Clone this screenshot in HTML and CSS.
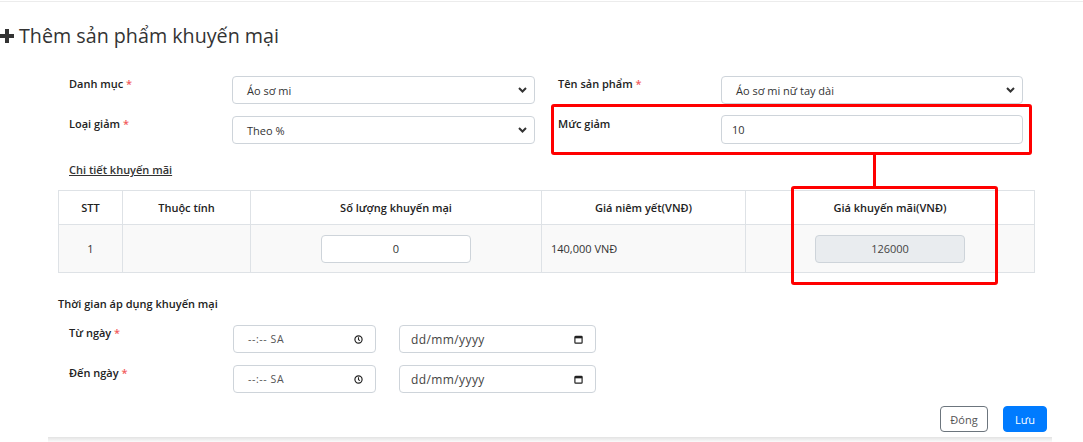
FILE: index.html
```html
<!DOCTYPE html>
<html lang="vi">
<head>
<meta charset="utf-8">
<title>Thêm sản phẩm khuyến mại</title>
<link rel="stylesheet" href="styles.css">
</head>
<body>
<div class="topline"></div>
<h1 class="title">
  <svg class="plus" width="14" height="14" viewBox="0 0 14 14"><path d="M5 0h4v5h5v4H9v5H5V9H0V5h5z" fill="#333"/></svg>
  <span>Thêm sản phẩm khuyến mại</span>
</h1>

<div class="card">
  <div class="form">
    <div class="row">
      <div class="half">
        <label class="lbl">Danh mục <b class="req">*</b></label>
        <div class="select f1"><span>Áo sơ mi</span>
          <svg class="chev" width="9" height="6" viewBox="0 0 9 6"><path d="M1 1l3.5 3.5L8 1" fill="none" stroke="#333" stroke-width="2"/></svg>
        </div>
      </div>
      <div class="half">
        <label class="lbl">Tên sản phẩm <b class="req">*</b></label>
        <div class="select f2"><span>Áo sơ mi nữ tay dài</span>
          <svg class="chev" width="9" height="6" viewBox="0 0 9 6"><path d="M1 1l3.5 3.5L8 1" fill="none" stroke="#333" stroke-width="2"/></svg>
        </div>
      </div>
    </div>
    <div class="row">
      <div class="half">
        <label class="lbl">Loại giảm <b class="req">*</b></label>
        <div class="select f1"><span>Theo %</span>
          <svg class="chev" width="9" height="6" viewBox="0 0 9 6"><path d="M1 1l3.5 3.5L8 1" fill="none" stroke="#333" stroke-width="2"/></svg>
        </div>
      </div>
      <div class="half">
        <label class="lbl">Mức giảm</label>
        <div class="input f2 num">10</div>
      </div>
    </div>
  </div>

  <div class="subhead">Chi tiết khuyến mãi</div>

  <table class="tbl">
    <thead>
      <tr>
        <th class="c1">STT</th>
        <th class="c2">Thuộc tính</th>
        <th class="c3">Số lượng khuyến mại</th>
        <th class="c4">Giá niêm yết(VNĐ)</th>
        <th class="c5">Giá khuyến mãi(VNĐ)</th>
      </tr>
    </thead>
    <tbody>
      <tr>
        <td class="center">1</td>
        <td></td>
        <td class="center"><div class="cellinput">0</div></td>
        <td>140,000 VNĐ</td>
        <td class="center"><div class="cellinput disabled">126000</div></td>
      </tr>
    </tbody>
  </table>

  <div class="timehead">Thời gian áp dụng khuyến mại</div>

  <div class="timerow">
    <label class="lbl tl">Từ ngày <b class="req">*</b></label>
    <div class="input time"><span>--:-- SA</span>
      <svg width="9" height="9" viewBox="0 0 10 10"><circle cx="5" cy="5" r="4" fill="none" stroke="#222" stroke-width="1.3"/><path d="M5 2.6V5.2L6.6 6.3" fill="none" stroke="#222" stroke-width="1.2"/></svg>
    </div>
    <div class="input date"><span>dd/mm/yyyy</span>
      <svg width="9" height="9" viewBox="0 0 10 10"><rect x="1" y="1.5" width="8" height="7.5" rx="0.8" fill="none" stroke="#222" stroke-width="1.3"/><rect x="1" y="1.5" width="8" height="2.2" fill="#222"/></svg>
    </div>
  </div>
  <div class="timerow">
    <label class="lbl tl">Đến ngày <b class="req">*</b></label>
    <div class="input time"><span>--:-- SA</span>
      <svg width="9" height="9" viewBox="0 0 10 10"><circle cx="5" cy="5" r="4" fill="none" stroke="#222" stroke-width="1.3"/><path d="M5 2.6V5.2L6.6 6.3" fill="none" stroke="#222" stroke-width="1.2"/></svg>
    </div>
    <div class="input date"><span>dd/mm/yyyy</span>
      <svg width="9" height="9" viewBox="0 0 10 10"><rect x="1" y="1.5" width="8" height="7.5" rx="0.8" fill="none" stroke="#222" stroke-width="1.3"/><rect x="1" y="1.5" width="8" height="2.2" fill="#222"/></svg>
    </div>
  </div>

  <div class="actions">
    <button class="btn btn-close">Đóng</button>
    <button class="btn btn-save">Lưu</button>
  </div>
</div>

<div class="mark mark1"></div>
<div class="mark-line"></div>
<div class="mark mark2"></div>
</body>
</html>
```

FILE: styles.css
```css
* { box-sizing: border-box; }
html, body { margin: 0; padding: 0; }
body {
  position: relative;
  width: 1083px;
  height: 442px;
  overflow: hidden;
  background: #fff;
  font-family: "Open Sans", "Noto Sans", sans-serif;
  color: #222;
  font-size: 11px;
}
.topline {
  height: 2px;
  border-bottom: 1px solid #ececec;
}
.title {
  margin: 22px 0 0;
  height: 24px;
  line-height: 24px;
  font-size: 19.7px;
  font-weight: 400;
  color: #333;
  display: flex;
  align-items: center;
  gap: 5px;
}
.plus { display: block; }

.card {
  position: relative;
  margin-left: 46px;
  width: 1014px;
  padding: 28px 12px 5px 13px;
  background: #fff;
}
.card::after {
  content: "";
  position: absolute;
  left: 2px;
  right: 8px;
  bottom: -5px;
  height: 5px;
  background: linear-gradient(to bottom, rgba(0,0,0,0.11), rgba(0,0,0,0.02));
}
.form { padding-left: 10px; display: flex; flex-direction: column; gap: 12px; }
.row { display: flex; gap: 23px; }
.half { display: flex; align-items: flex-start; }
.lbl {
  width: 163px;
  font-weight: 600;
  font-size: 11px;
  line-height: 15px;
  color: #222;
}
.req { color: #f25c5c; font-weight: 600; }
.select, .input {
  height: 28px;
  border: 1px solid #ced4da;
  border-radius: 4px;
  background: #fff;
  display: flex;
  align-items: center;
  justify-content: space-between;
  font-size: 11px;
  color: #333;
}
.select { padding: 0 7px 0 14px; }
.f1 { width: 303px; }
.f2 { width: 302px; }
.input.num { padding-left: 10px; height: 29px; margin-top: -1px; }
.chev { display: block; }

.subhead {
  margin: 18px 0 0 10px;
  line-height: 16px;
  font-weight: 600;
  text-decoration: underline;
  color: #333;
}

.tbl {
  margin-top: 12px;
  margin-left: -1px;
  width: 977px;
  border-collapse: collapse;
  table-layout: fixed;
}
.tbl th, .tbl td {
  border: 1px solid #dee2e6;
  font-size: 11px;
}
.tbl th { height: 34px; font-weight: 600; text-align: center; color: #222; }
.tbl td { height: 48px; background: #f9f9f9; padding: 0 9px; color: #333; }
.tbl .center { text-align: center; }
.c1 { width: 64px; }
.c2 { width: 128px; }
.c3 { width: 291px; }
.c4 { width: 204px; }
.cellinput {
  width: 150px;
  height: 28px;
  margin: 0 auto;
  border: 1px solid #ced4da;
  border-radius: 4px;
  background: #fff;
  display: flex;
  align-items: center;
  justify-content: center;
  color: #333;
}
.cellinput.disabled { background: #e9ecef; color: #444; }

.timehead {
  margin-top: 23px;
  margin-left: -1px;
  line-height: 16px;
  font-weight: 600;
  color: #222;
}
.timerow {
  margin-top: 13px;
  padding-left: 10px;
  display: flex;
  align-items: flex-start;
}
.timerow + .timerow { margin-top: 12px; }
.tl { width: 164px; }
.input.time { width: 143px; padding: 0 12px 0 14px; margin-right: 23px; color: #555; }
.input.time span { font-size: 10.5px; letter-spacing: 0.6px; }
.input.date { width: 197px; padding: 0 12px 0 11px; color: #444; }
.input.date span { font-size: 12px; letter-spacing: 0.4px; }
.input svg { display: block; }

.actions {
  margin-top: 13px;
  display: flex;
  justify-content: flex-end;
  gap: 15px;
  padding-right: 1px;
}
.btn {
  height: 26px;
  border-radius: 4px;
  font-family: inherit;
  font-size: 11px;
  padding: 0;
  cursor: pointer;
}
.btn-close { width: 48px; background: #fff; border: 1px solid #6c757d; color: #555; }
.btn-save { width: 44px; background: #007bff; border: 1px solid #007bff; color: #fff; }

.mark {
  position: absolute;
  border: 3px solid #ff0000;
  border-radius: 3px;
  pointer-events: none;
}
.mark1 { left: 551px; top: 104px; width: 481px; height: 51px; }
.mark2 { left: 791px; top: 186px; width: 207px; height: 99px; }
.mark-line {
  position: absolute;
  left: 873px;
  top: 154px;
  width: 3px;
  height: 34px;
  background: #ff0000;
}
```
